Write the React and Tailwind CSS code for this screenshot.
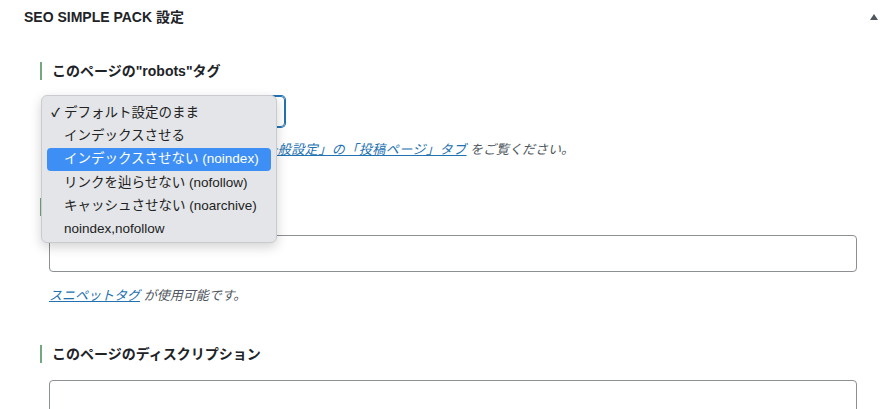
import React from 'react';

const options = [
    { id: 1, label: "デフォルト設定のまま", checked: true },
    { id: 2, label: "インデックスさせる" },
    { id: 3, label: "インデックスさせない (noindex)", active: true },
    { id: 4, label: "リンクを辿らせない (nofollow)" },
    { id: 5, label: "キャッシュさせない (noarchive)" },
    { id: 6, label: "noindex,nofollow" },
];

const Label = ({ children }) => (
    <div className="border-l-2 border-[#72a77f] pl-[10px] h-[18px] flex items-center text-[14px] font-bold text-[#1d2327] leading-none">
        {children}
    </div>
);

const App = () => {
    return (
        <div className="w-[895px] h-[409px] overflow-hidden bg-white text-[#1d2327]" style={{ fontFamily: '"Liberation Sans", "Noto Sans CJK JP", sans-serif' }}>
            <div className="h-[34px] pl-6 pr-[17px] flex items-center justify-between">
                <h2 className="text-[14px] font-bold">SEO SIMPLE PACK 設定</h2>
                <svg width="8" height="6" viewBox="0 0 8 6"><path d="M4 0 L8 6 L0 6 Z" fill="#50575e" /></svg>
            </div>

            <div className="pl-10 pr-[38px] pt-[28px]">
                <Label>このページの"robots"タグ</Label>
                <div className="pl-[9px]">
                    <div className="relative mt-[16px] w-[236px] h-[31px] border border-[#2271b1] rounded-[4px] shadow-[0_0_0_1px_#2271b1]">
                        <div className="absolute left-[-9px] top-[-2px] w-[236px] h-[148px] bg-[#e3e5e8] border border-[#c9cbce] rounded-[6px] shadow-[0_4px_12px_rgba(0,0,0,0.18)] px-[5px] pt-[5px] z-10">
                            {options.map((o) => (
                                <div
                                    key={o.id}
                                    className={`h-[23.3px] flex items-center rounded-[4px] text-[13.5px] leading-none ${o.active ? 'bg-[#3d8ff5] text-white' : 'text-[#222]'}`}
                                >
                                    <span className="w-[17px] text-center text-[12px] font-bold">{o.checked ? '✓' : ''}</span>
                                    {o.label}
                                </div>
                            ))}
                        </div>
                    </div>
                    <p className="mt-[13px] text-[13px] text-[#50575e] italic">
                        このページのデフォルト設定値は<a className="ml-[7px] text-[#2271b1] underline tracking-[0.5px]">「一般設定」の「投稿ページ」タブ</a> をご覧ください。
                    </p>
                </div>

                <div className="mt-[38px]">
                    <Label>このページのタイトル</Label>
                </div>
                <div className="pl-[9px]">
                    <div className="mt-[19px] h-[37px] border border-[#8c8f94] rounded-[4px]"></div>
                    <p className="mt-[14px] text-[13px] text-[#50575e] italic">
                        <a className="text-[#2271b1] underline">スニペットタグ</a> が使用可能です。
                    </p>
                </div>

                <div className="mt-[40px]">
                    <Label>このページのディスクリプション</Label>
                </div>
                <div className="pl-[9px]">
                    <div className="mt-[17px] h-[60px] border border-[#8c8f94] rounded-[4px]"></div>
                </div>
            </div>
        </div>
    );
};

export default App;
